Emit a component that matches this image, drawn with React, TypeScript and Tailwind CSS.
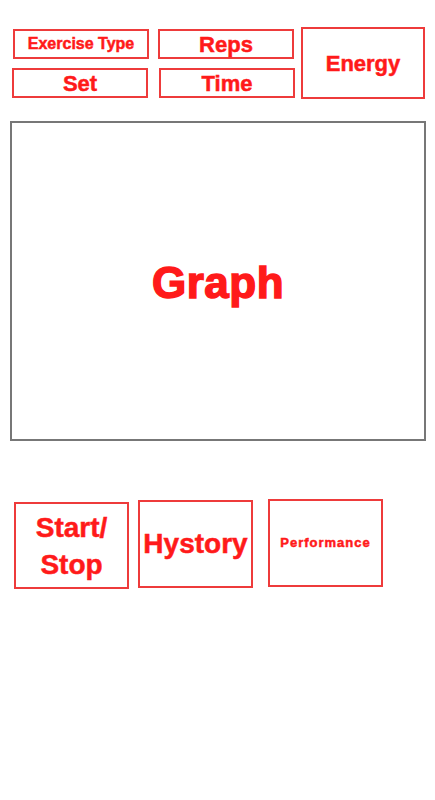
import React from 'react';

const red =
  'border-2 border-[#ee3b3b] flex items-center justify-center text-[#ff1a1a] font-bold [-webkit-text-stroke:0.5px_#ff1a1a]';

const App = () => {
  return (
    <div
      className="w-[435px] h-[800px] bg-white"
      style={{ fontFamily: '"Liberation Sans", Arial, sans-serif' }}
    >
      <div className="flex pt-[27px]">
        <div className="flex flex-col pt-[2px]">
          <div className="flex">
            <div className={`${red} ml-[13px] w-[136px] h-[30px] text-[16px]`}>Exercise Type</div>
            <div className={`${red} ml-[9px] w-[136px] h-[30px] text-[22px]`}>Reps</div>
          </div>
          <div className="flex mt-[9px]">
            <div className={`${red} ml-[12px] w-[136px] h-[30px] text-[22px]`}>Set</div>
            <div className={`${red} ml-[11px] w-[136px] h-[30px] text-[22px]`}>Time</div>
          </div>
        </div>
        <div className={`${red} ml-[6px] w-[124px] h-[72px] text-[22px]`}>Energy</div>
      </div>

      <div className="mt-[22px] ml-[10px] w-[416px] h-[320px] border-2 border-[#777777] flex items-center justify-center text-[#ff1a1a] font-bold text-[44px] tracking-[0.5px] pt-[4px] [-webkit-text-stroke:1.5px_#ff1a1a]">
        Graph
      </div>

      <div className="flex items-start mt-[58px]">
        <div className={`${red} mt-[3px] ml-[14px] w-[115px] h-[87px] text-[28px] leading-[37px] text-center`}>
          Start/
          <br />
          Stop
        </div>
        <div className={`${red} mt-[1px] ml-[9px] w-[115px] h-[88px] text-[28px]`}>Hystory</div>
        <div className={`${red} ml-[15px] w-[115px] h-[88px] text-[13px] tracking-[1px]`}>Performance</div>
      </div>
    </div>
  );
};

export default App;
